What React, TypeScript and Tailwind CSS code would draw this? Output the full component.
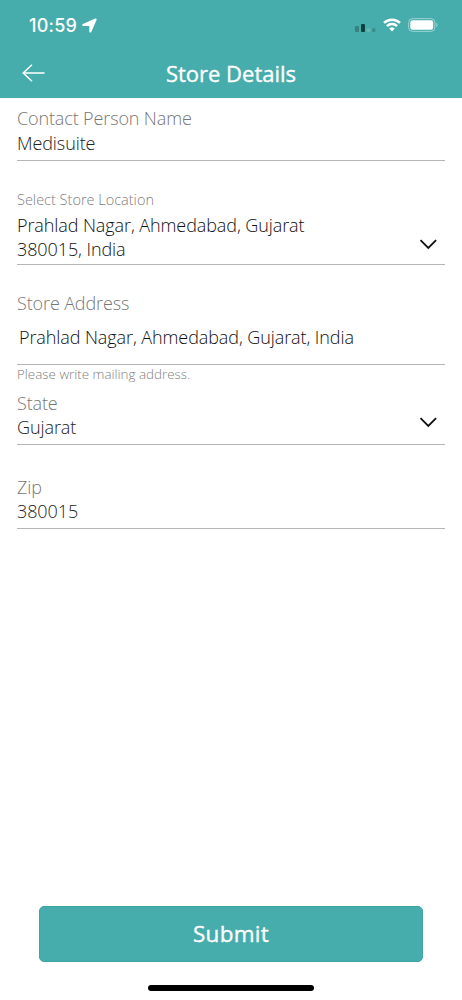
import type { ReactNode } from "react";

interface FieldProps {
  className: string;
  label: string;
  labelClassName?: string;
  valueClassName?: string;
  chevronClassName?: string;
  children: ReactNode;
}

function StatusBar() {
  return (
    <div className="flex h-[50px] items-center pl-[29px] pr-[23px] text-white">
      <span className="pt-[2px] font-['Inter'] text-[18px] font-medium leading-6 tracking-[0.2px]">
        10:59
      </span>
      <svg className="ml-[5px] mt-px" width="15" height="15" viewBox="0 0 15 15" fill="currentColor">
        <path d="M13.200.6.9 5.900C-.2 6.400 0 7.900 1.200 7.900h5.600c.3 0 .5.2.5.5v5.100c0 1.300 1.500 1.500 2 .4L14.500 1.900c.4-.9-.4-1.700-1.300-1.300Z" />
      </svg>

      <svg className="ml-auto mt-[6px]" width="21" height="9" viewBox="0 0 21 9">
        <rect x="0" y="2" width="4" height="6" rx="1" fill="#3b7f7e" />
        <rect x="6" y="0" width="4" height="8" rx="1" fill="#0d4240" />
        <rect x="11.500" y="4.500" width="4" height="3.500" rx="1" fill="#64b9b7" />
        <rect x="17" y="4.300" width="3.500" height="3.700" rx="1" fill="#3c8d8b" />
      </svg>
      <svg className="ml-[7px]" width="18" height="14" viewBox="0 0 18 14" fill="none" stroke="currentColor" strokeWidth="2.500">
        <path d="M1 4.900a11.500 11.500 0 0 1 16 0" />
        <path d="M3.900 8.200a7.300 7.300 0 0 1 10.200 0" />
        <path d="M9 9.200a5 5 0 0 0-2.800 1.200L9 13.500l2.800-3.100A5 5 0 0 0 9 9.200Z" fill="currentColor" stroke="none" />
      </svg>
      <svg className="ml-[7px]" width="31" height="14" viewBox="0 0 31 14">
        <rect x=".6" y=".6" width="26.300" height="12.800" rx="4" fill="none" stroke="#9ad3d1" />
        <rect x="2.300" y="2.300" width="22.900" height="9.400" rx="2.300" fill="white" />
        <path d="M28.300 4.800c1.600.5 1.600 3.900 0 4.400Z" fill="#9ad3d1" />
      </svg>
    </div>
  );
}

function Field({
  className,
  label,
  labelClassName = "text-[18px] tracking-[-0.13px] text-[#777]",
  valueClassName = "text-[#222]",
  chevronClassName,
  children,
}: FieldProps) {
  return (
    <div className={`relative border-b border-[#b5b5b5] ${className}`}>
      <p className={`leading-6 ${labelClassName}`}>{label}</p>
      <div className={`text-[18px] leading-6 tracking-[-0.09px] ${valueClassName}`}>
        {children}
      </div>

      {chevronClassName && (
        <svg
          className={`absolute right-2 ${chevronClassName}`}
          width="18"
          height="11"
          viewBox="0 0 18 11"
          fill="none"
          stroke="#111"
          strokeWidth="1.800"
        >
          <path d="m1.500 1.200 7.800 7.800 7.800-7.800" />
        </svg>
      )}
    </div>
  );
}

export default function App() {
  return (
    <div className="flex h-[1000px] w-[462px] flex-col bg-white font-['Open_Sans',sans-serif] font-light">
      <header className="h-[98px] bg-[#47adac] text-white">
        <StatusBar />
        <div className="relative flex h-[46px] items-center justify-center">
          <button className="absolute left-[22px] top-[14px]" aria-label="Back">
            <svg width="23" height="18" viewBox="0 0 23 18" fill="none" stroke="currentColor" strokeWidth="1.500">
              <path d="M10 .8 1.200 9l8.800 8.200M1.200 9h21.300" />
            </svg>
          </button>
          <h1 className="text-[22px] font-medium leading-6 [-webkit-text-stroke:0.35px_white]">
            Store Details
          </h1>
        </div>
      </header>

      <main className="flex flex-col px-[17px]">
        <Field className="mt-2 h-[55px]" label="Contact Person Name" valueClassName="mt-px text-[#222]">
          Medisuite
        </Field>

        <Field
          className="mt-[27px] h-[77px]"
          label="Select Store Location"
          labelClassName="text-[14.500px] text-[#808080]"
          valueClassName="mt-px text-[#111]"
          chevronClassName="bottom-[14px]"
        >
          Prahlad Nagar, Ahmedabad, Gujarat
          <br />
          380015, India
        </Field>

        <Field
          className="mt-[26px] h-[74px]"
          label="Store Address"
          valueClassName="mt-[10px] pl-[2px] text-[#111]"
        >
          Prahlad Nagar, Ahmedabad, Gujarat, India
        </Field>
        <p className="text-[13.400px] leading-[18px] text-[#808080]">
          Please write mailing address.
        </p>

        <Field
          className="mt-2 h-[54px]"
          label="State"
          chevronClassName="bottom-4"
        >
          Gujarat
        </Field>

        <Field className="mt-[30px] h-[54px]" label="Zip">
          380015
        </Field>
      </main>

      <footer className="mt-auto flex flex-col items-center pb-[9px]">
        <button className="h-14 w-[384px] rounded-[5px] border border-[#3ba6a5] bg-[#47adac] text-[22.500px] font-medium tracking-[0.25px] text-white [-webkit-text-stroke:0.35px_white]">
          Submit
        </button>
        <div className="mt-[23px] h-[6px] w-[166px] rounded-full bg-black" />
      </footer>
    </div>
  );
}
